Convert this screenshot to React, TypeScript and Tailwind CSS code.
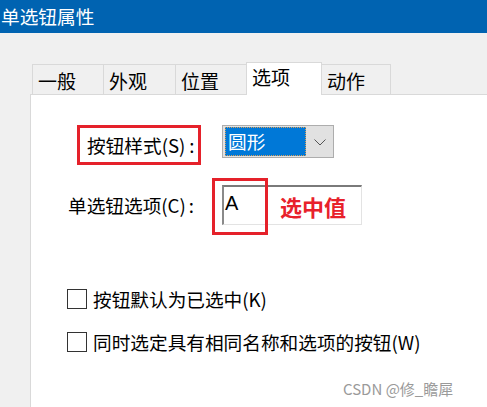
const tabs = [
  { label: "一般", w: "w-[72px]" },
  { label: "外观", w: "w-[73px]" },
  { label: "位置", w: "w-[72px]" },
  { label: "选项", w: "w-[76px]", active: true },
  { label: "动作", w: "w-[70px]" },
];

function Chevron() {
  return (
    <svg width="12" height="7" viewBox="0 0 12 7" fill="none">
      <polyline points="0.5,0.5 6,6 11.5,0.5" stroke="#555" strokeWidth="1" />
    </svg>
  );
}

export default function App() {
  return (
    <div className="relative flex h-[407px] w-[487px] flex-col overflow-hidden bg-[#f0f0f0] font-['Noto_Sans_CJK_SC','Noto_Sans',sans-serif] text-black">
      <div className="flex h-[33px] shrink-0 items-center bg-[#0063b1] pl-[1px] text-[18.67px] leading-none text-white">
        单选钮属性
      </div>

      <div className="mt-[29px] -mb-px flex items-end pl-[32px]">
        {tabs.map((t, i) =>
          t.active ? (
            <div
              key={t.label}
              className={`relative z-10 -ml-px flex h-[33px] ${t.w} items-start border border-b-0 border-[#d9d9d9] bg-white pl-[5px] pt-[4px] text-[19px] leading-none`}
            >
              {t.label}
            </div>
          ) : (
            <div
              key={t.label}
              className={`${i === 0 ? "" : "-ml-px"} flex h-[31px] ${t.w} items-start border border-b-0 border-[#d9d9d9] bg-[#f0f0f0] pl-[5px] pt-[6px] text-[19px] leading-none`}
            >
              {t.label}
            </div>
          )
        )}
      </div>

      <div className="ml-[30px] flex-1 border-l border-t border-[#d9d9d9] bg-white">
        <div className="mt-[30px] flex items-start">
          <div className="ml-[46px] flex h-[40px] w-[124px] items-center whitespace-nowrap border-[3px] border-[#e5212a] pl-[7px] text-[18.67px] leading-none">
            按钮样式(S)<span className="ml-[4px]">:</span>
          </div>
          <div className="ml-[21px] flex h-[33px] w-[112px] items-center border border-[#adadad] bg-[#e1e1e1] pl-[2px]">
            <div className="flex h-[29px] w-[81px] items-center border border-dotted border-[#d9a05a] bg-[#0078d7] pl-[2px] text-[18.67px] leading-none text-white">
              圆形
            </div>
            <div className="ml-[8px] flex items-center pt-[1px]">
              <Chevron />
            </div>
          </div>
        </div>

        <div className="mt-[20px] flex items-start">
          <div className="ml-[37px] flex h-[40px] w-[154px] items-center whitespace-nowrap text-[18.67px] leading-none">
            单选钮选项(C)<span className="ml-[3px]">:</span>
          </div>
          <div className="relative h-[40px] w-[140px] border-b border-l-2 border-r border-t-2 border-b-[#e3e3e3] border-l-[#8a8a8a] border-r-[#e3e3e3] border-t-[#7a7a7a]">
            <div className="flex h-full items-start pl-[1px] pt-[6px] font-['Liberation_Sans',sans-serif] text-[20px] leading-none">
              A
            </div>
            <div className="absolute left-[56px] top-0 bottom-0 flex items-center text-[22px] font-bold leading-none text-[#e8212b]">
              选中值
            </div>
            <div className="absolute -left-[12px] -top-[9px] h-[57px] w-[56px] border-[3px] border-[#e5212a]" />
          </div>
        </div>

        <div className="mt-[64px] flex flex-col gap-[23px]">
          <label className="ml-[36px] flex items-center">
            <span className="h-[20px] w-[20px] border border-[#333]" />
            <span className="ml-[6px] text-[18.67px] leading-none">按钮默认为已选中(K)</span>
          </label>
          <label className="ml-[36px] flex items-center">
            <span className="h-[20px] w-[20px] border border-[#333]" />
            <span className="ml-[6px] text-[18.67px] leading-none">同时选定具有相同名称和选项的按钮(W)</span>
          </label>
        </div>
      </div>

      <div className="absolute left-[343px] top-[381px] text-[15px] leading-none text-[#9a9a9a]">
        CSDN @修_瞻犀
      </div>
    </div>
  );
}
